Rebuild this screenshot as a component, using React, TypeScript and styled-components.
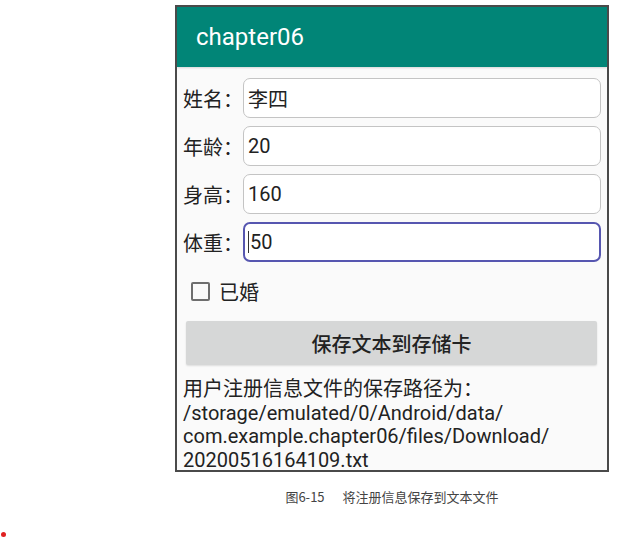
import styled, { createGlobalStyle } from "styled-components";

const GlobalStyle = createGlobalStyle`
  html, body {
    margin: 0;
    padding: 0;
    background: #ffffff;
  }
  body {
    font-family: Roboto, "Noto Sans CJK SC", sans-serif;
  }
`;

const Page = styled.div`
  width: 641px;
  height: 538px;
  position: relative;
  overflow: hidden;
  padding-top: 5px;
  box-sizing: border-box;
`;

const Phone = styled.div`
  margin-left: 175px;
  width: 434px;
  height: 467px;
  box-sizing: border-box;
  border: 2px solid #4a4a4a;
  background: #fafafa;
  display: flex;
  flex-direction: column;
  overflow: hidden;
`;

const AppBar = styled.div`
  height: 60px;
  flex-shrink: 0;
  background: #018577;
  display: flex;
  align-items: center;
  padding-left: 19px;
  color: #ffffff;
  font-size: 24px;
  font-family: Roboto, sans-serif;
  box-shadow: 0 1px 2px rgba(0, 0, 0, 0.15);
`;

const Body = styled.div`
  padding: 11px 6px 0 6px;
  display: flex;
  flex-direction: column;
`;

const Form = styled.div`
  display: flex;
  flex-direction: column;
  gap: 8px;
`;

const Row = styled.div`
  display: flex;
  align-items: center;
`;

const Label = styled.span`
  width: 60px;
  flex-shrink: 0;
  font-size: 20px;
  color: #222;
  font-family: "Noto Sans CJK SC", sans-serif;
`;

const Field = styled.div<{ $focused?: boolean }>`
  flex: 1;
  height: 40px;
  box-sizing: border-box;
  border: ${(p) => (p.$focused ? "2px solid #5656b0" : "1px solid #c4c4c4")};
  border-radius: 7px;
  background: #fff;
  display: flex;
  align-items: center;
  padding-left: ${(p) => (p.$focused ? "3px" : "4px")};
  font-size: 20px;
  color: #222;
  font-family: Roboto, "Noto Sans CJK SC", sans-serif;
`;

const Caret = styled.span`
  display: inline-block;
  width: 1px;
  height: 22px;
  background: #333;
  margin-right: 1px;
`;

const CheckRow = styled.label`
  display: flex;
  align-items: center;
  gap: 9px;
  margin: 15px 0 0 8px;
  font-size: 20px;
  color: #222;
  font-family: "Noto Sans CJK SC", sans-serif;
`;

const Box = styled.span`
  width: 15px;
  height: 15px;
  border: 2px solid #6e6e6e;
  border-radius: 2px;
  display: inline-block;
`;

const SaveButton = styled.button`
  margin: 15px 4px 0 3px;
  height: 44px;
  border: none;
  border-radius: 2px;
  background: #d6d7d7;
  box-shadow: 0 1px 2px rgba(0, 0, 0, 0.12);
  font-size: 20px;
  color: #222;
  font-weight: 500;
  font-family: "Noto Sans CJK SC", sans-serif;
`;

const Result = styled.div`
  margin-top: 13px;
  font-size: 20px;
  line-height: 23.6px;
  color: #222;
  font-family: Roboto, "Noto Sans CJK SC", sans-serif;
`;

const Caption = styled.div`
  margin: 15px 0 0 175px;
  width: 434px;
  text-align: center;
  font-size: 13px;
  color: #444;
  font-family: "Noto Sans CJK SC", sans-serif;
`;

const Gap = styled.span`
  display: inline-block;
  width: 18px;
`;

const Dot = styled.span`
  position: absolute;
  left: 1px;
  top: 532px;
  width: 5px;
  height: 5px;
  border-radius: 50%;
  background: #e02020;
`;

const fields = [
  { label: "姓名：", value: "李四" },
  { label: "年龄：", value: "20" },
  { label: "身高：", value: "160" },
  { label: "体重：", value: "50", focused: true },
];

export default function App() {
  return (
    <Page>
      <GlobalStyle />
      <Phone>
        <AppBar>chapter06</AppBar>
        <Body>
          <Form>
            {fields.map((f) => (
              <Row key={f.label}>
                <Label>{f.label}</Label>
                <Field $focused={f.focused}>
                  {f.focused && <Caret />}
                  {f.value}
                </Field>
              </Row>
            ))}
          </Form>
          <CheckRow>
            <Box />
            已婚
          </CheckRow>
          <SaveButton>保存文本到存储卡</SaveButton>
          <Result>
            用户注册信息文件的保存路径为：
            <br />
            /storage/emulated/0/Android/data/
            <br />
            com.example.chapter06/files/Download/
            <br />
            20200516164109.txt
          </Result>
        </Body>
      </Phone>
      <Caption>
        图6-15<Gap />将注册信息保存到文本文件
      </Caption>
      <Dot />
    </Page>
  );
}
